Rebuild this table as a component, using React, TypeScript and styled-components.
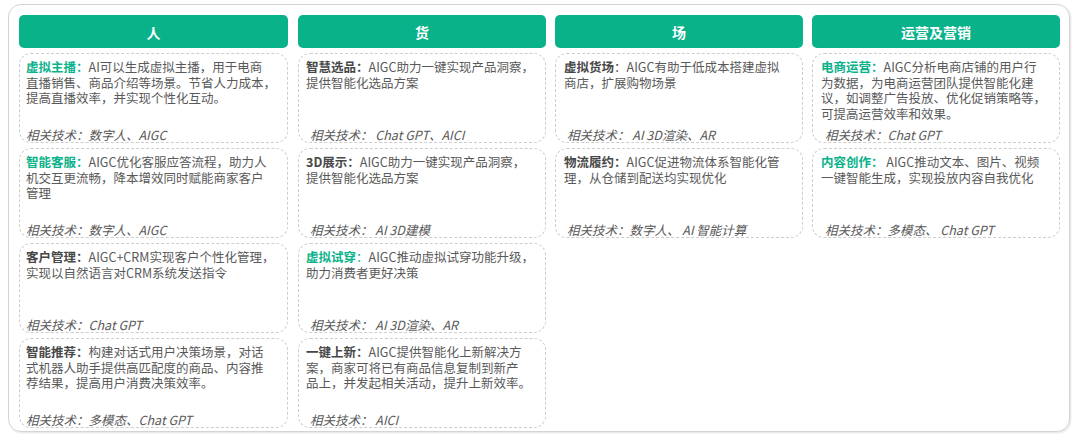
import React from "react";
import styled, { createGlobalStyle } from "styled-components";

const Global = createGlobalStyle`
  html, body { margin: 0; padding: 0; background: #ffffff; }
  body { font-family: "Noto Sans CJK SC", "Noto Sans", sans-serif; }
  * { box-sizing: border-box; }
`;

const ACCENT = "#0ab28a";

const Page = styled.div`
  width: 1080px;
  height: 436px;
  padding: 4px 11px 4px 8px;
`;

const Frame = styled.div`
  width: 1062px;
  height: 428px;
  border: 1px solid #d4d4d4;
  border-radius: 13px;
  box-shadow: 1px 1px 2px rgba(0, 0, 0, 0.12);
  padding: 10px 7px 0 10px;
  display: grid;
  grid-template-columns: 270px 248px 248px 248px;
  column-gap: 9px;
  & > :first-child { margin-right: 1px; }
`;

const Column = styled.div`
  display: flex;
  flex-direction: column;
  gap: 5px;
`;

const Header = styled.div`
  height: 33px;
  background: ${ACCENT};
  border-radius: 5px;
  color: #ffffff;
  font-weight: 700;
  font-size: 14px;
  display: flex;
  align-items: center;
  justify-content: center;
`;

const Card = styled.div<{ $pad: number }>`
  height: 90px;
  border: 1px dashed #cdcdcd;
  border-radius: 12px;
  padding: 5px 4px 0 ${(p) => p.$pad}px;
  display: flex;
  flex-direction: column;
  justify-content: space-between;
  color: #595959;
  font-size: 12.5px;
  line-height: 15.5px;
`;

const Body = styled.div``;

const Line = styled.div`
  white-space: nowrap;
`;

const Title = styled.span<{ $accent: boolean }>`
  font-weight: 700;
  color: ${(p) => (p.$accent ? ACCENT : "#474747")};
`;

const Colon = styled.span<{ $bold: boolean }>`
  font-weight: ${(p) => (p.$bold ? 700 : 400)};
`;

const Tech = styled.div<{ $indent: number }>`
  font-style: italic;
  white-space: nowrap;
  color: #595959;
  padding-left: ${(p) => p.$indent}px;
  line-height: 15px;
`;

type Item = {
  title: string;
  accent: boolean;
  colonBold?: boolean;
  lines: string[];
  tech: string;
};

type Col = { name: string; pad: number; techIndent: number; items: Item[] };

const columns: Col[] = [
  {
    name: "人",
    pad: 6,
    techIndent: -1,
    items: [
      {
        title: "虚拟主播",
        accent: true,
        lines: ["AI可以生成虚拟主播，用于电商", "直播销售、商品介绍等场景。节省人力成本，", "提高直播效率，并实现个性化互动。"],
        tech: "相关技术：数字人、AIGC",
      },
      {
        title: "智能客服",
        accent: true,
        lines: ["AIGC优化客服应答流程，助力人", "机交互更流畅，降本增效同时赋能商家客户", "管理"],
        tech: "相关技术：数字人、AIGC",
      },
      {
        title: "客户管理",
        accent: false,
        lines: ["AIGC+CRM实现客户个性化管理，", "实现以自然语言对CRM系统发送指令"],
        tech: "相关技术：Chat GPT",
      },
      {
        title: "智能推荐",
        accent: false,
        lines: ["构建对话式用户决策场景，对话", "式机器人助手提供高匹配度的商品、内容推", "荐结果，提高用户消费决策效率。"],
        tech: "相关技术：多模态、Chat GPT",
      },
    ],
  },
  {
    name: "货",
    pad: 7,
    techIndent: 4,
    items: [
      {
        title: "智慧选品",
        accent: false,
        lines: ["AIGC助力一键实现产品洞察，", "提供智能化选品方案"],
        tech: "相关技术： Chat GPT、AICI",
      },
      {
        title: "3D展示",
        accent: false,
        lines: ["AIGC助力一键实现产品洞察，", "提供智能化选品方案"],
        tech: "相关技术： AI 3D建模",
      },
      {
        title: "虚拟试穿",
        accent: true,
        colonBold: false,
        lines: ["AIGC推动虚拟试穿功能升级，", "助力消费者更好决策"],
        tech: "相关技术： AI 3D渲染、AR",
      },
      {
        title: "一键上新",
        accent: false,
        lines: ["AIGC提供智能化上新解决方", "案，商家可将已有商品信息复制到新产", "品上，并发起相关活动，提升上新效率。"],
        tech: "相关技术： AICI",
      },
    ],
  },
  {
    name: "场",
    pad: 8,
    techIndent: 3,
    items: [
      {
        title: "虚拟货场",
        accent: false,
        colonBold: false,
        lines: ["AIGC有助于低成本搭建虚拟", "商店，扩展购物场景"],
        tech: "相关技术： AI 3D渲染、AR",
      },
      {
        title: "物流履约",
        accent: false,
        lines: ["AIGC促进物流体系智能化管", "理，从仓储到配送均实现优化"],
        tech: "相关技术：数字人、 AI 智能计算",
      },
    ],
  },
  {
    name: "运营及营销",
    pad: 8,
    techIndent: 4,
    items: [
      {
        title: "电商运营",
        accent: true,
        lines: ["AIGC分析电商店铺的用户行", "为数据，为电商运营团队提供智能化建", "议，如调整广告投放、优化促销策略等，", "可提高运营效率和效果。"],
        tech: "相关技术：Chat GPT",
      },
      {
        title: "内容创作",
        accent: true,
        lines: [" AIGC推动文本、图片、视频", "一键智能生成，实现投放内容自我优化"],
        tech: "相关技术：多模态、 Chat GPT",
      },
    ],
  },
];

export default function App() {
  return (
    <Page>
      <Global />
      <Frame>
        {columns.map((col) => (
          <Column key={col.name}>
            <Header>{col.name}</Header>
            {col.items.map((it) => (
              <Card key={it.title} $pad={col.pad}>
                <Body>
                  {it.lines.map((l, i) => (
                    <Line key={i}>
                      {i === 0 && (
                        <Title $accent={it.accent}>
                          {it.title}
                          <Colon $bold={it.colonBold !== false}>：</Colon>
                        </Title>
                      )}
                      {l}
                    </Line>
                  ))}
                </Body>
                <Tech $indent={col.techIndent}>{it.tech}</Tech>
              </Card>
            ))}
          </Column>
        ))}
      </Frame>
    </Page>
  );
}
